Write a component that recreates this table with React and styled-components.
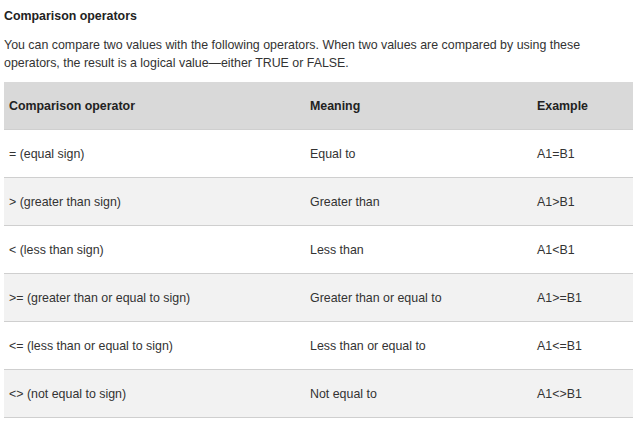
import React from 'react';
import styled, { createGlobalStyle } from 'styled-components';

const GlobalStyle = createGlobalStyle`
  body {
    margin: 0;
    background: #ffffff;
    font-family: "Liberation Sans", Arial, sans-serif;
    color: #333333;
  }
`;

const Page = styled.div`
  padding: 7px 7px 0 4px;
  width: 640px;
  box-sizing: border-box;
`;

const Title = styled.h3`
  margin: 0 0 11px 0;
  font-size: 12.4px;
  line-height: 18px;
  font-weight: 700;
  color: #222222;
`;

const Intro = styled.p`
  margin: 0 0 10px 0;
  font-size: 12.4px;
  line-height: 18px;
  color: #333333;
`;

const Table = styled.div`
  width: 629px;
  display: grid;
  grid-template-columns: 301px 227px 101px;
`;

const Row = styled.div`
  display: contents;

  & > div {
    background: ${({ $head, $shade }) => ($head ? '#d9d9d9' : $shade ? '#f2f2f2' : '#ffffff')};
    font-weight: ${({ $head }) => ($head ? 700 : 400)};
    color: ${({ $head }) => ($head ? '#222222' : '#333333')};
  }
`;

const Cell = styled.div`
  height: 47px;
  display: flex;
  align-items: center;
  padding-left: 5px;
  font-size: 12.4px;
  border-bottom: 1px solid #cfcfcf;
`;

const rows = [
  ['= (equal sign)', 'Equal to', 'A1=B1'],
  ['> (greater than sign)', 'Greater than', 'A1>B1'],
  ['< (less than sign)', 'Less than', 'A1<B1'],
  ['>= (greater than or equal to sign)', 'Greater than or equal to', 'A1>=B1'],
  ['<= (less than or equal to sign)', 'Less than or equal to', 'A1<=B1'],
  ['<> (not equal to sign)', 'Not equal to', 'A1<>B1'],
];

const App = () => (
  <Page>
    <GlobalStyle />
    <Title>Comparison operators</Title>
    <Intro>
      You can compare two values with the following operators. When two values are compared by using these
      <br />
      operators, the result is a logical value—either TRUE or FALSE.
    </Intro>
    <Table>
      <Row $head>
        <Cell>Comparison operator</Cell>
        <Cell>Meaning</Cell>
        <Cell>Example</Cell>
      </Row>
      {rows.map((r, i) => (
        <Row key={r[2]} $shade={i % 2 === 1}>
          {r.map((text, j) => (
            <Cell key={j}>{text}</Cell>
          ))}
        </Row>
      ))}
    </Table>
  </Page>
);

export default App;
